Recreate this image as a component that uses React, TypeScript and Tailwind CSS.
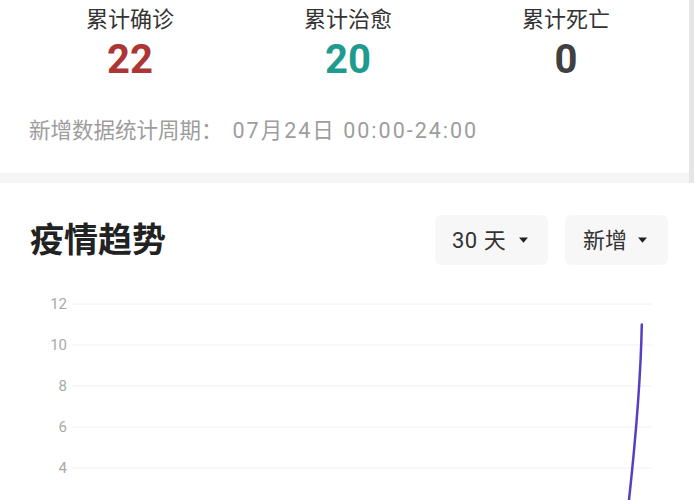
import React from 'react';

const STATS = [
  { label: '累计确诊', value: '22', className: 'text-[#ad3535]' },
  { label: '累计治愈', value: '20', className: 'text-[#1f9a8e]' },
  { label: '累计死亡', value: '0', className: 'text-[#404040]' },
];

const Y_TICKS = [12, 10, 8, 6, 4, 2, 0];

const Caret = () => (
  <svg width="9" height="6" viewBox="0 0 9 6" className="shrink-0">
    <path d="M0 0.5 H9 L4.5 5.8 Z" fill="#222" />
  </svg>
);

const TrendChart = () => (
  <svg width="700" height="260" viewBox="0 0 700 260" className="block">
    {Y_TICKS.map((t, i) => {
      const y = 39 + i * 41;
      return (
        <g key={t}>
          <line x1="72" x2="652" y1={y} y2={y} stroke="#f0f0f0" strokeWidth="1" />
          <text
            x="67"
            y={y}
            textAnchor="end"
            dominantBaseline="central"
            fontSize="15"
            fill="#a9a9a9"
            fontFamily="Roboto, 'Liberation Sans', sans-serif"
          >
            {t}
          </text>
        </g>
      );
    })}
    <path
      d="M641.8 59.5 C640.6 120, 635 180, 629 235 L626.5 262"
      fill="none"
      stroke="#5a3ec2"
      strokeWidth="2.5"
      strokeLinecap="round"
    />
  </svg>
);

export default function App() {
  return (
    <div
      className="w-[700px] h-[500px] overflow-hidden bg-white"
      style={{ fontFamily: "Roboto, 'Noto Sans CJK SC', sans-serif" }}
    >
      <div className="flex">
        <div className="w-[694px] border-r-[5px] border-[#e6e6e6]">
          <div className="pt-[6px] pb-[27px]">
            <div className="grid grid-cols-3 pl-[21px] pr-[14px]">
              {STATS.map((s) => (
                <div key={s.label} className="flex flex-col items-center">
                  <span className="text-[22px] leading-[28px] text-[#333]">{s.label}</span>
                  <span className={`mt-[4px] text-[40px] leading-[44px] font-bold ${s.className}`}>
                    {s.value}
                  </span>
                </div>
              ))}
            </div>
            <p className="mt-[34px] pl-[29px] text-[21.5px] leading-[30px] text-[#9d9d9d]">
              新增数据统计周期：
              <span className="ml-[10px] tracking-[2px]">07月24日 00:00-24:00</span>
            </p>
          </div>
          <div className="h-[10px] bg-[#f5f5f5]" />
        </div>
      </div>

      <div className="pt-[32px]">
        <div className="flex items-center justify-between h-[50px] pl-[30px] pr-[32px]">
          <h2 className="text-[34px] font-semibold text-[#222] leading-none">疫情趋势</h2>
          <div className="flex gap-[17px]">
            <button className="w-[113px] h-[50px] pl-[17px] rounded-md bg-[#f7f7f7] flex items-center gap-[13px] text-[22px] text-[#333]">
              <span className="tracking-[0.5px]">30 天</span>
              <Caret />
            </button>
            <button className="w-[103px] h-[50px] pl-[18px] rounded-md bg-[#f7f7f7] flex items-center gap-[11px] text-[22px] text-[#333]">
              新增
              <Caret />
            </button>
          </div>
        </div>
        <TrendChart />
      </div>
    </div>
  );
}
